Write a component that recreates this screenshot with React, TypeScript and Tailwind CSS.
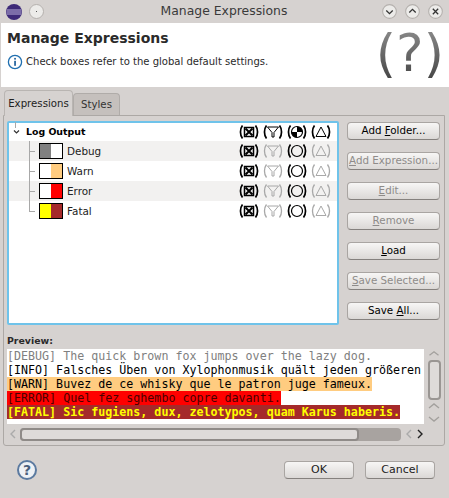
import type { ReactNode } from "react";

const sans = "font-['DejaVu_Sans',sans-serif]";

// little wrapper: every state icon sits between two round brackets
const Paren = ({ dim, children }: { dim?: boolean; children: ReactNode }) => {
  const c = dim ? "#a8a8a8" : "#000";
  return (
    <svg width="20" height="14" viewBox="0 0 20 14" fill="none" stroke={c} strokeWidth={dim ? 1.3 : 1.7}>
      <path d="M3.5 0.5 C0.8 4 0.8 10 3.5 13.5" />
      <path d="M16.5 0.5 C19.2 4 19.2 10 16.5 13.5" />
      {children}
    </svg>
  );
};

const IconBox = () => (
  <Paren>
    <rect x="5.5" y="2.5" width="9" height="9" strokeWidth="1.5" />
    <path d="M6.5 3.5 L13.5 10.5 M13.5 3.5 L6.5 10.5" strokeWidth="2" />
  </Paren>
);

const IconFunnel = ({ dim }: { dim?: boolean }) => (
  <Paren dim={dim}>
    <path d="M4.5 2 H15.5 L11 7.5 V12 H9 V7.5 Z" strokeWidth="1" />
  </Paren>
);

const IconCircle = ({ filled }: { filled?: boolean }) => (
  <Paren>
    <circle cx="10" cy="7" r="5.5" strokeWidth="1.2" />
    {filled && <path d="M10 7 V1.5 A5.5 5.5 0 0 1 15.5 7 Z M10 7 V12.5 A5.5 5.5 0 0 1 4.5 7 Z" fill="#000" stroke="none" />}
  </Paren>
);

const IconTriangle = ({ dim }: { dim?: boolean }) => (
  <Paren dim={dim}>
    <path d="M10 2 L15 11.5 H5 Z" strokeWidth="1" />
  </Paren>
);

const rows = [
  { name: "Debug", left: "bg-[#808080]", right: "bg-white", band: true },
  { name: "Warn", left: "bg-white", right: "bg-[#ffcc80]", band: false },
  { name: "Error", left: "bg-white", right: "bg-[#ff0000]", band: true },
  { name: "Fatal", left: "bg-[#ffff00]", right: "bg-[#a52a2a]", band: false },
];

const IconCols = ({ top }: { top?: boolean }) => (
  <div className="flex shrink-0 gap-[4px] pr-[6px]">
    <IconBox />
    <IconFunnel dim={!top} />
    <IconCircle filled={top} />
    <IconTriangle dim={!top} />
  </div>
);

const Btn = ({ u, rest, pre, off }: { pre?: string; u: string; rest: string; off?: boolean }) => (
  <div
    className={`flex h-[18px] w-[93px] items-center justify-center whitespace-pre rounded-[4px] border border-[#a9a5a2] border-b-[#85817e] bg-gradient-to-b from-[#f7f6f5] to-[#dbd8d6] text-[10.3px] ${
      off ? "text-[#8e8b89]" : "text-black"
    }`}
  >
    <span>
      {pre}
      <span className="underline">{u}</span>
      {rest}
    </span>
  </div>
);

const previewLine = "h-[14px] w-fit whitespace-pre";

const ChevUp = () => (
  <svg width="14" height="10" viewBox="0 0 14 10" fill="none" stroke="#a3a09d" strokeWidth="1.4">
    <path d="M2 7l5-4 5 4" />
  </svg>
);

export default function App() {
  return (
    <div className={`flex h-[498px] w-[449px] flex-col overflow-hidden bg-[#d6d2d0] ${sans} text-[#2a2a2a]`}>
      {/* title bar */}
      <div className="flex h-[23px] shrink-0 items-center pl-[6px] pr-[6px]">
        <svg width="16" height="16" viewBox="0 0 16 16">
          <circle cx="8" cy="8" r="8" fill="#3d2a78" />
          <path d="M0.8 6H15.2M0.5 8H15.5M0.8 10H15.2" stroke="#c9c0e4" strokeWidth="0.9" />
        </svg>
        <div className="ml-[7px] flex h-[15px] w-[15px] items-center justify-center rounded-full border border-[#b5b1ae] bg-[#ecebe9]">
          <div className="h-[1px] w-[1px] bg-[#555]" />
        </div>
        <div className="flex-1 pl-[22px] text-center text-[12.4px] text-[#3a3a3a]">Manage Expressions</div>
        <div className="flex gap-[8px]">
          {["M4 6l3 3 3-3", "M4 8l3-3 3 3", "M4.5 4.5l5 5m0-5l-5 5"].map((d) => (
            <svg key={d} width="15" height="15" viewBox="0 0 14 14" fill="#ecebe9" stroke="#b5b1ae">
              <circle cx="7" cy="7" r="6.4" />
              <path d={d} fill="none" stroke="#333" strokeWidth="1.2" />
            </svg>
          ))}
        </div>
      </div>

      {/* banner */}
      <div className="ml-[1px] flex h-[64px] shrink-0 justify-between bg-white">
        <div className="pl-[6px] pt-[5px]">
          <div className="text-[14px] font-bold leading-[20px]">Manage Expressions</div>
          <div className="mt-[6px] flex items-center gap-[3px] text-[10.05px] leading-[14px]">
            <svg width="16" height="16" viewBox="0 0 16 16" fill="none">
              <circle cx="8" cy="8" r="6.6" stroke="#1f6fb0" strokeWidth="1.3" />
              <rect x="7.2" y="6.8" width="1.7" height="5" fill="#1f5f9a" />
              <rect x="7.2" y="3.9" width="1.7" height="1.7" fill="#1f5f9a" />
            </svg>
            <span>Check boxes refer to the global default settings.</span>
          </div>
        </div>
        <div className="mr-[5px] mt-[3px] flex h-[55px] items-center bg-gradient-to-b from-[#8f8f8f] to-[#444] bg-clip-text text-[52px] leading-[55px] text-transparent">
          (?)
        </div>
      </div>

      {/* tabs */}
      <div className="flex h-[28px] shrink-0 items-end pl-[4px]">
        <div className="z-10 -mb-px flex h-[26px] w-[69px] items-center justify-center rounded-t-[4px] border border-b-0 border-[#b9b5b2] bg-[#d6d2d0] text-[10.2px] text-[#222]">
          Expressions
        </div>
        <div className="flex h-[22px] w-[47px] items-center justify-center rounded-t-[4px] border border-b-0 border-[#b0aca9] bg-[#c5c0bd] pt-[1px] text-[10.2px] text-[#333]">
          Styles
        </div>
      </div>

      {/* folder body */}
      <div className="ml-[3px] mr-[4px] flex h-[331px] shrink-0 flex-col rounded-b-[3px] border border-[#aca8a5] px-[3px] pt-[5px]">
        <div className="flex h-[204px] shrink-0 gap-[8px]">
          <div className="relative w-[332px] rounded-[2px] border-2 border-[#6fc3ea] bg-white">
            <div className="absolute left-[6px] top-[-1px] h-[6px] w-px bg-[#a8a8a8]" />
            <div className="flex h-[18px] items-center justify-between text-[9.4px] font-bold text-black">
              <div className="flex items-center pl-[4px]">
                <svg width="7" height="8" viewBox="0 0 7 8" fill="none" stroke="#333" strokeWidth="1.2">
                  <path d="M1 2.5l2.5 2.5 2.5-2.5" />
                </svg>
                <span className="ml-[6px]">Log Output</span>
              </div>
              <IconCols top />
            </div>
            {rows.map((r, i) => (
              <div key={r.name} className={`flex h-[20px] items-center justify-between ${r.band ? "bg-[#f2f1f0]" : "bg-white"}`}>
                <div className="flex items-center pl-[20px]">
                  <div className="relative h-[20px] w-[10px]">
                    <div className={`absolute left-0 top-0 w-px bg-[#a8a8a8] ${i === 3 ? "h-[10px]" : "h-[20px]"}`} />
                    <div className="absolute left-0 top-[10px] h-px w-[6px] bg-[#a8a8a8]" />
                  </div>
                  <div className="flex h-[16px] w-[24px] border border-black">
                    <div className={`flex-1 ${r.left}`} />
                    <div className={`flex-1 ${r.right}`} />
                  </div>
                  <span className="ml-[4px] pt-[1px] text-[10.4px] text-[#222]">{r.name}</span>
                </div>
                <IconCols />
              </div>
            ))}
          </div>

          <div className="flex flex-col gap-[12px] pt-[1px]">
            <Btn pre="Add " u="F" rest="older..." />
            <Btn u="A" rest="dd Expression..." off />
            <Btn u="E" rest="dit..." off />
            <Btn u="R" rest="emove" off />
            <Btn u="L" rest="oad" />
            <Btn u="S" rest="ave Selected..." off />
            <Btn pre="Save " u="A" rest="ll..." />
          </div>
        </div>

        {/* preview */}
        <div className="mt-[9px] text-[9.4px] font-bold leading-[14px] text-[#2a2a2a]">Preview:</div>
        <div className="mt-[1px] flex h-[75px] shrink-0">
          <div className="w-[417px] overflow-hidden bg-white font-['DejaVu_Sans_Mono',monospace] text-[11.66px] leading-[14px]">
            <div className={`${previewLine} text-[#808080]`}>[DEBUG] The quick brown fox jumps over the lazy dog.</div>
            <div className={`${previewLine} text-black`}>[INFO] Falsches Üben von Xylophonmusik quält jeden größeren</div>
            <div className={`${previewLine} bg-[#ffcc80] text-black`}>[WARN] Buvez de ce whisky que le patron juge fameux.</div>
            <div className={`${previewLine} bg-[#ff0000] text-[#4a0000]`}>[ERROR] Quel fez sghembo copre davanti.</div>
            <div className={`${previewLine} bg-[#a52a2a] font-bold text-[#ffff00]`}>[FATAL] Sic fugiens, dux, zelotypos, quam Karus haberis.</div>
          </div>
          <div className="ml-[3px] flex w-[14px] flex-col items-center">
            <ChevUp />
            <div className="mt-[2px] h-[40px] w-[13px] shrink-0 rounded-[4px] border-2 border-[#9a9693] bg-[#dedbd9]" />
            <div className="mt-[1px]">
              <ChevUp />
            </div>
            <div className="mt-[3px]">
              <svg width="14" height="10" viewBox="0 0 14 10" fill="none" stroke="#a3a09d" strokeWidth="1.4">
                <path d="M2 3l5 4 5-4" />
              </svg>
            </div>
          </div>
        </div>
        <div className="mt-[3px] flex h-[14px] items-center">
          <svg width="12" height="12" viewBox="0 0 12 12" fill="none" stroke="#aaa" strokeWidth="1.4">
            <path d="M8 2L4 6l4 4" />
          </svg>
          <div className="ml-[1px] h-[13px] w-[381px] rounded-[4px] bg-[#a8a3a0]">
            <div className="h-[13px] w-[339px] rounded-[4px] border-2 border-[#8f8b88] bg-[#dedbd9]" />
          </div>
          <svg className="ml-[3px]" width="10" height="12" viewBox="0 0 10 12" fill="none" stroke="#aaa" strokeWidth="1.4">
            <path d="M7 2L3 6l4 4" />
          </svg>
          <svg className="ml-[1px]" width="10" height="12" viewBox="0 0 10 12" fill="none" stroke="#222" strokeWidth="1.4">
            <path d="M3 2l4 4-4 4" />
          </svg>
        </div>
      </div>

      {/* footer */}
      <div className="flex flex-1 items-center pb-[4px] pl-[17px] pr-[14px]">
        <div className="flex h-[20px] w-[20px] items-center justify-center rounded-full border-2 border-[#5b7aa0] bg-[#eef1f5] text-[14px] font-bold leading-none text-[#4a5f7c]">
          ?
        </div>
        <div className="ml-auto flex gap-[11px]">
          <div className="flex h-[18px] w-[70px] items-center justify-center rounded-[4px] border border-[#a9a5a2] border-b-[#85817e] bg-gradient-to-b from-[#f7f6f5] to-[#dbd8d6] text-[11px] text-[#222]">
            OK
          </div>
          <div className="flex h-[18px] w-[70px] items-center justify-center rounded-[4px] border border-[#a9a5a2] border-b-[#85817e] bg-gradient-to-b from-[#f7f6f5] to-[#dbd8d6] text-[11px] text-[#222]">
            Cancel
          </div>
        </div>
      </div>
    </div>
  );
}
